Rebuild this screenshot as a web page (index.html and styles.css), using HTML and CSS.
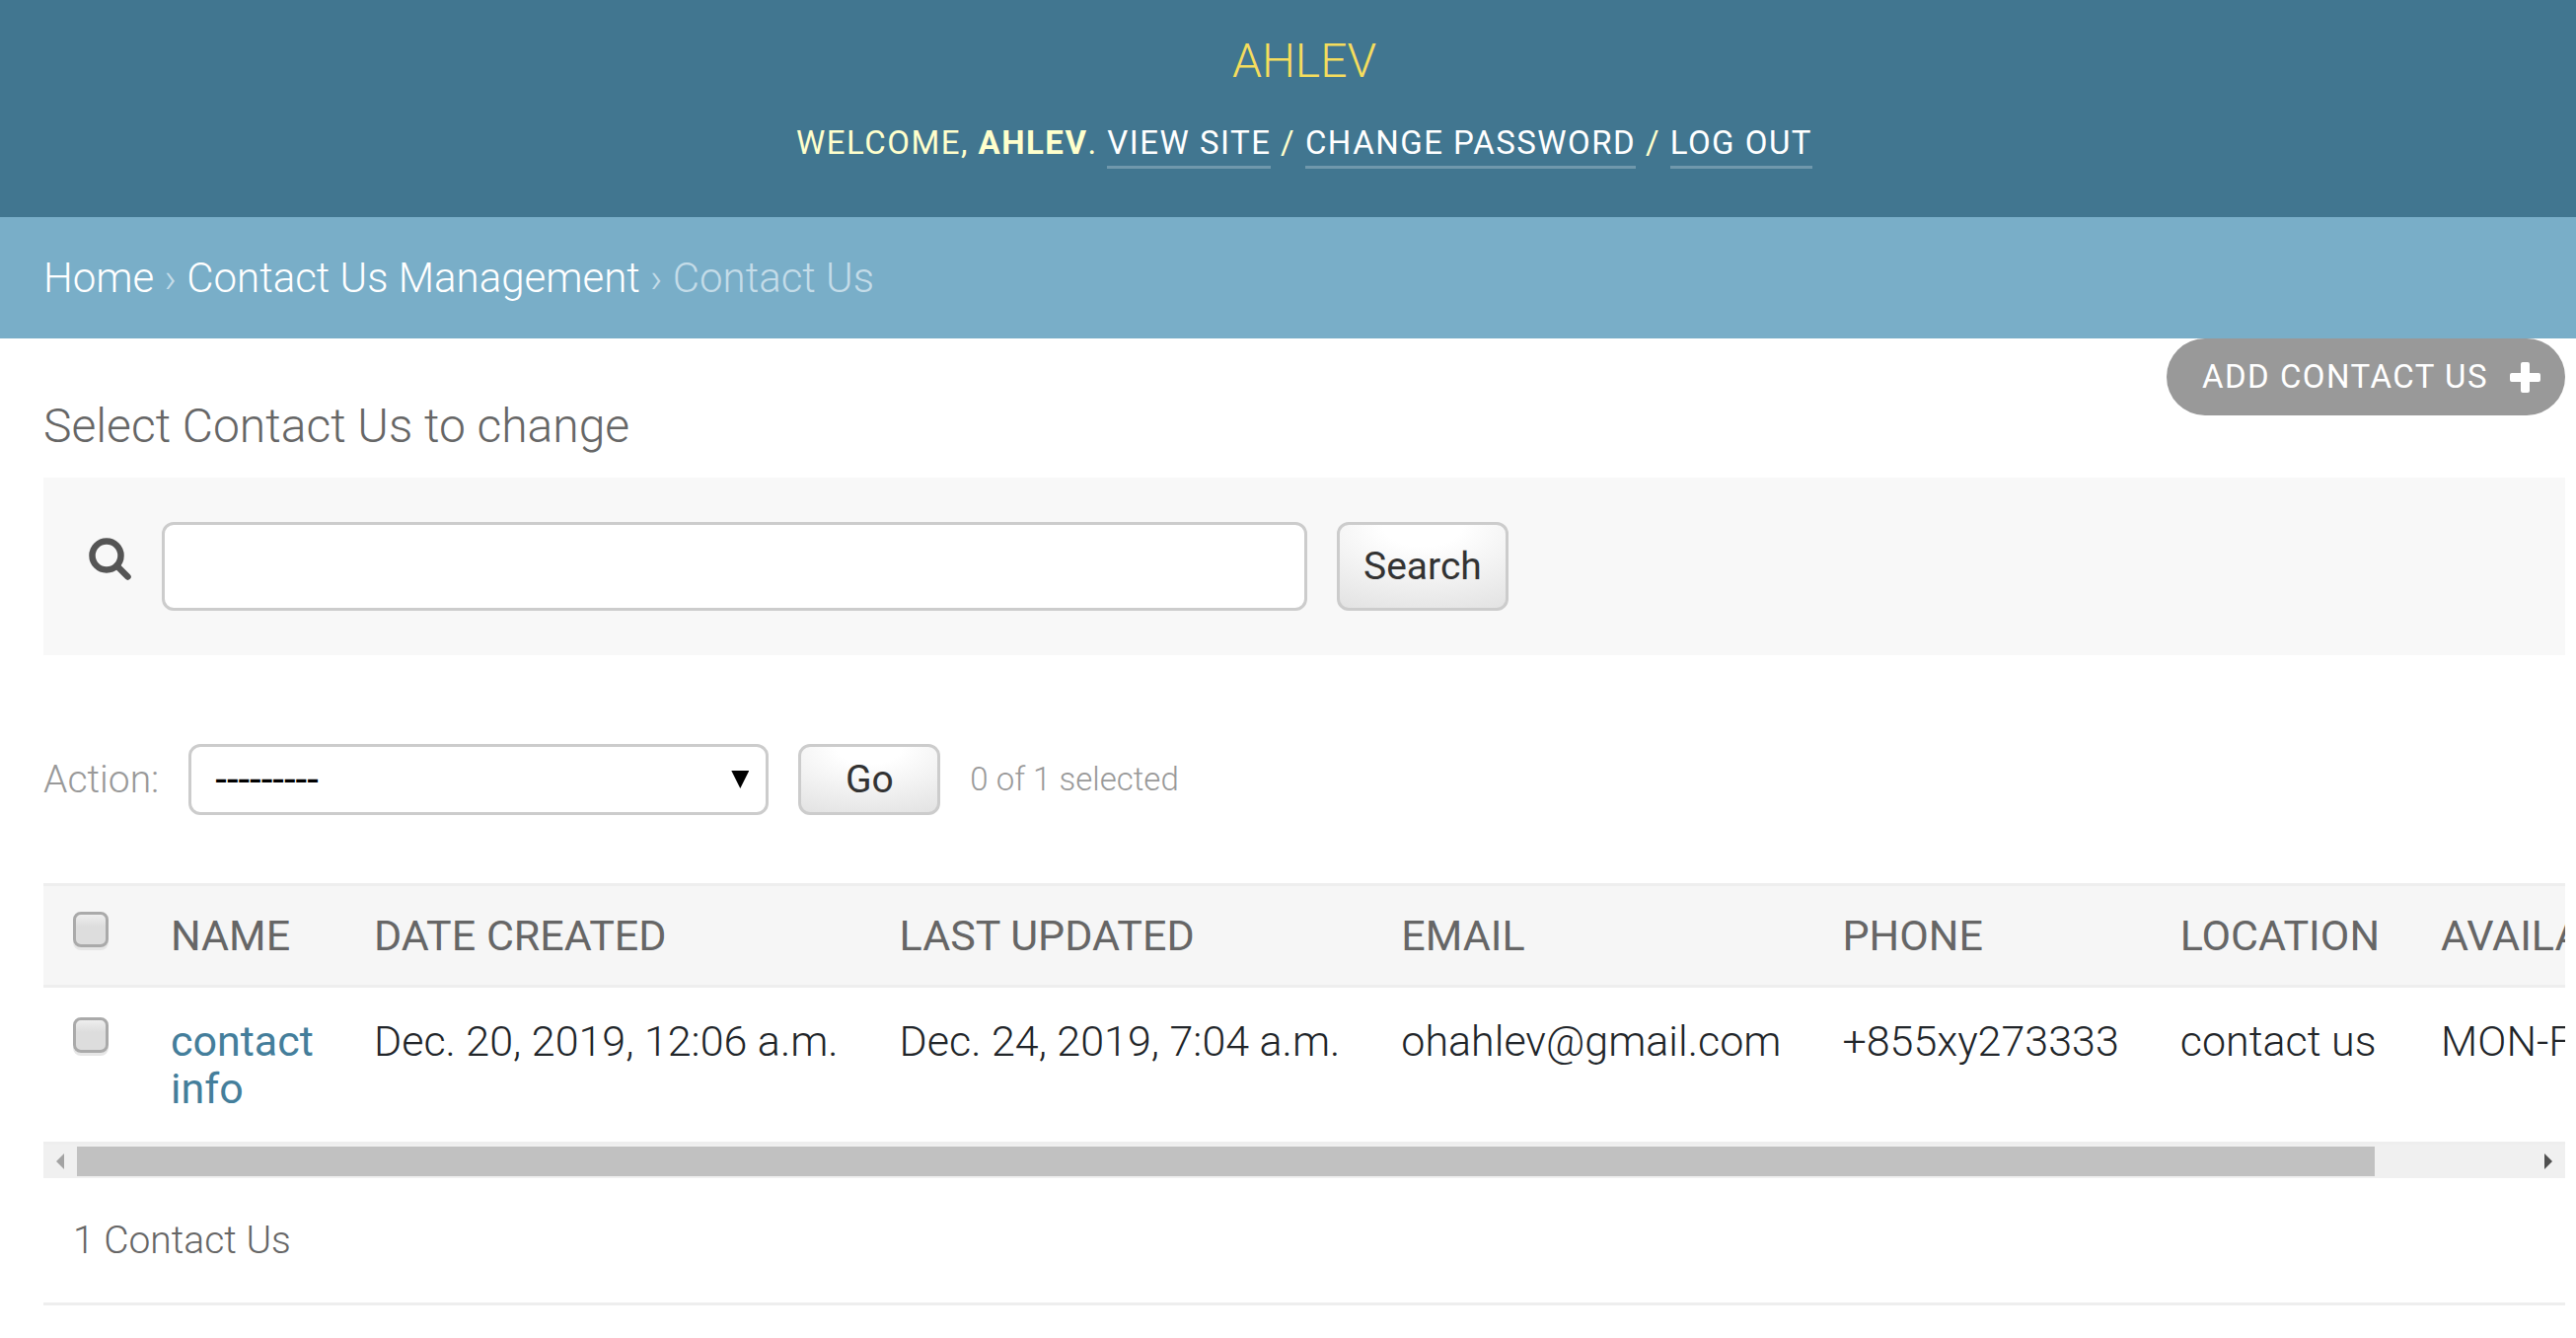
FILE: index.html
```html
<!DOCTYPE html>
<html lang="en">
<head>
<meta charset="utf-8">
<title>Select Contact Us to change</title>
<link rel="stylesheet" href="styles.css">
</head>
<body>
<header class="header">
  <h1 class="brand"><a href="#">AHLEV</a></h1>
  <div class="user-tools">Welcome, <strong>AHLEV</strong>. <a href="#">View site</a> / <a href="#">Change password</a> / <a href="#">Log out</a></div>
</header>
<nav class="breadcrumbs"><a href="#">Home</a> › <a href="#">Contact Us Management</a> › Contact Us</nav>
<main class="content">
  <div class="title-row">
    <h2 class="title">Select Contact Us to change</h2>
    <a class="add-link" href="#">Add Contact Us
      <svg class="plus" viewBox="0 0 31 31" aria-hidden="true"><path d="M13 0h5q2 0 2 2v9h9q2 0 2 2v5q0 2-2 2h-9v9q0 2-2 2h-5q-2 0-2-2v-9H2q-2 0-2-2v-5q0-2 2-2h9V2q0-2 2-2z" fill="#fff"/></svg>
    </a>
  </div>
  <form class="search">
    <label class="search-label" for="searchbar" aria-label="Search">
      <svg class="glass" viewBox="0 0 43 43" aria-hidden="true"><circle cx="18" cy="18" r="14.5" fill="none" stroke="#555" stroke-width="6.5"/><path d="M28.500 28.500L39.500 39.500" stroke="#555" stroke-width="6.500" stroke-linecap="round"/></svg>
    </label>
    <input class="search-input" id="searchbar" type="text">
    <button class="button" type="submit">Search</button>
  </form>
  <form>
    <div class="actions">
      <label for="action">Action:</label>
      <div class="select-box">
        <select class="select" id="action"><option>---------</option></select>
      </div>
      <button class="button go" type="submit">Go</button>
      <span class="counter">0 of 1 selected</span>
    </div>
    <div class="results">
      <table class="table">
        <thead>
          <tr>
            <th class="pick"><input class="check" type="checkbox" aria-label="Select all"></th>
            <th class="name">Name</th>
            <th>Date created</th>
            <th>Last updated</th>
            <th>Email</th>
            <th>Phone</th>
            <th>Location</th>
            <th>Available</th>
          </tr>
        </thead>
        <tbody>
          <tr>
            <td class="pick"><input class="check" type="checkbox" aria-label="Select contact info"></td>
            <th class="name"><a href="#">contact info</a></th>
            <td>Dec. 20, 2019, 12:06 a.m.</td>
            <td>Dec. 24, 2019, 7:04 a.m.</td>
            <td>ohahlev@gmail.com</td>
            <td>+855xy273333</td>
            <td>contact us</td>
            <td>MON-FRI</td>
          </tr>
        </tbody>
      </table>
    </div>
    <div class="scrollbar" aria-hidden="true">
      <span class="arrow arrow-left"></span>
      <div class="track"><div class="thumb"></div></div>
      <span class="arrow arrow-right"></span>
    </div>
    <p class="paginator">1 Contact Us</p>
  </form>
</main>
</body>
</html>
```
FILE: styles.css
```css
* { box-sizing: border-box; }

body {
  margin: 0;
  background: #fff;
  color: #212529;
  font-family: Roboto, "Liberation Sans", sans-serif;
  font-size: 42px;
  font-weight: 300;
  line-height: 48px;
}

a { color: #447e9b; text-decoration: none; }

.header {
  display: flex;
  flex-direction: column;
  align-items: center;
  gap: 35px;
  padding: 35px 11px 54px 44px;
  background: #417690;
  color: #ffc;
}

.brand { margin: 0; font-size: 48px; font-weight: 300; line-height: 54px; }
.brand a { color: #f5dd5d; }

.user-tools {
  font-size: 33px;
  font-weight: 400;
  line-height: 42px;
  letter-spacing: 0.045em;
  text-transform: uppercase;
}

.user-tools a {
  padding-bottom: 4px;
  border-bottom: 3px solid rgba(255, 255, 255, .25);
  color: #fff;
}

.breadcrumbs {
  padding: 38px 11px 37px 44px;
  background: #79aec8;
  color: #c4dce8;
}

.breadcrumbs a { color: #fff; }

.content { padding: 0 11px 0 44px; }

.title-row {
  display: flex;
  justify-content: space-between;
  align-items: flex-start;
}

.title {
  margin: 0;
  padding: 62px 0 25px;
  color: #666;
  font-size: 48px;
  font-weight: 300;
  line-height: 54px;
}

.add-link {
  display: flex;
  align-items: center;
  gap: 22px;
  height: 78px;
  padding: 0 25px 0 36px;
  border-radius: 39px;
  background: #999;
  color: #fff;
  font-size: 33px;
  font-weight: 400;
  letter-spacing: 0.045em;
  text-transform: uppercase;
}

.plus { width: 31px; height: 31px; }

.search {
  display: flex;
  align-items: center;
  padding: 45px;
  background: #f8f8f8;
}

.search-label { display: flex; padding: 0 0 15px 1px; }
.glass { width: 43px; height: 43px; }

.search-input {
  width: 1161px;
  height: 90px;
  margin: 0 30px 0 31px;
  padding: 0 18px;
  border: 3px solid #ccc;
  border-radius: 12px;
  background: #fff;
  font: inherit;
}

.button {
  height: 90px;
  padding: 0 24px;
  border: 3px solid #ccc;
  border-radius: 12px;
  background: radial-gradient(ellipse 120% 130% at 50% 0, #fff 20%, #ddd);
  color: #333;
  font: 400 39px/48px Roboto, sans-serif;
}

.actions {
  display: flex;
  align-items: center;
  gap: 30px;
  padding: 90px 0 69px;
  color: #999;
  font-size: 39px;
}

.select-box {
  display: grid;
  align-items: center;
  width: 588px;
}

.select-box::after {
  grid-area: 1 / 1;
  justify-self: end;
  width: 18px;
  height: 18px;
  margin-right: 20px;
  background: #000;
  clip-path: polygon(0 0, 100% 0, 50% 100%);
  content: "";
  pointer-events: none;
}

.select {
  grid-area: 1 / 1;
  width: 100%;
  height: 72px;
  padding: 0 24px;
  border: 3px solid #ccc;
  border-radius: 12px;
  background: #fff;
  color: #000;
  font: 400 42px/48px Roboto, sans-serif;
  appearance: none;
}

.go { min-width: 144px; height: 72px; }
.counter { font-size: 33px; }

.results { overflow: hidden; }

.table {
  min-width: 100%;
  border-collapse: separate;
  border-spacing: 0;
  font-size: 43px;
}

.table th,
.table td {
  padding: 30px 32px 30px 30px;
  border-bottom: 3px solid #eee;
  text-align: left;
  vertical-align: top;
  white-space: nowrap;
}

.table th { font-weight: 400; }

.table thead th {
  padding-top: 26px;
  padding-bottom: 26px;
  border-top: 3px solid #eee;
  background: #f6f6f6;
  color: #666;
  text-transform: uppercase;
}

.table .pick { min-width: 99px; }
.table .name { min-width: 206px; max-width: 206px; white-space: normal; }

.check {
  display: block;
  width: 36px;
  height: 36px;
  margin: 0;
  border: 3px solid #aaa;
  border-radius: 8px;
  background: linear-gradient(#eee, #ddd 40%, #ddd);
  box-shadow: 0 3px 0 #e6e6e6;
  appearance: none;
}

.scrollbar {
  display: flex;
  align-items: center;
  height: 34px;
  padding: 0 13px;
  background: #f0f0f0;
}

.arrow { width: 8px; height: 16px; }
.arrow-left { background: #a3a3a3; clip-path: polygon(100% 0, 100% 100%, 0 50%); }
.arrow-right { background: #505050; clip-path: polygon(0 0, 100% 50%, 0 100%); }
.track { flex: 1; padding: 0 13px; }
.thumb { width: 93.6%; height: 30px; background: #c1c1c1; }

.paginator {
  margin: 0;
  padding: 39px 30px;
  border-bottom: 3px solid #eee;
  color: #666;
  font-size: 39px;
}
```
